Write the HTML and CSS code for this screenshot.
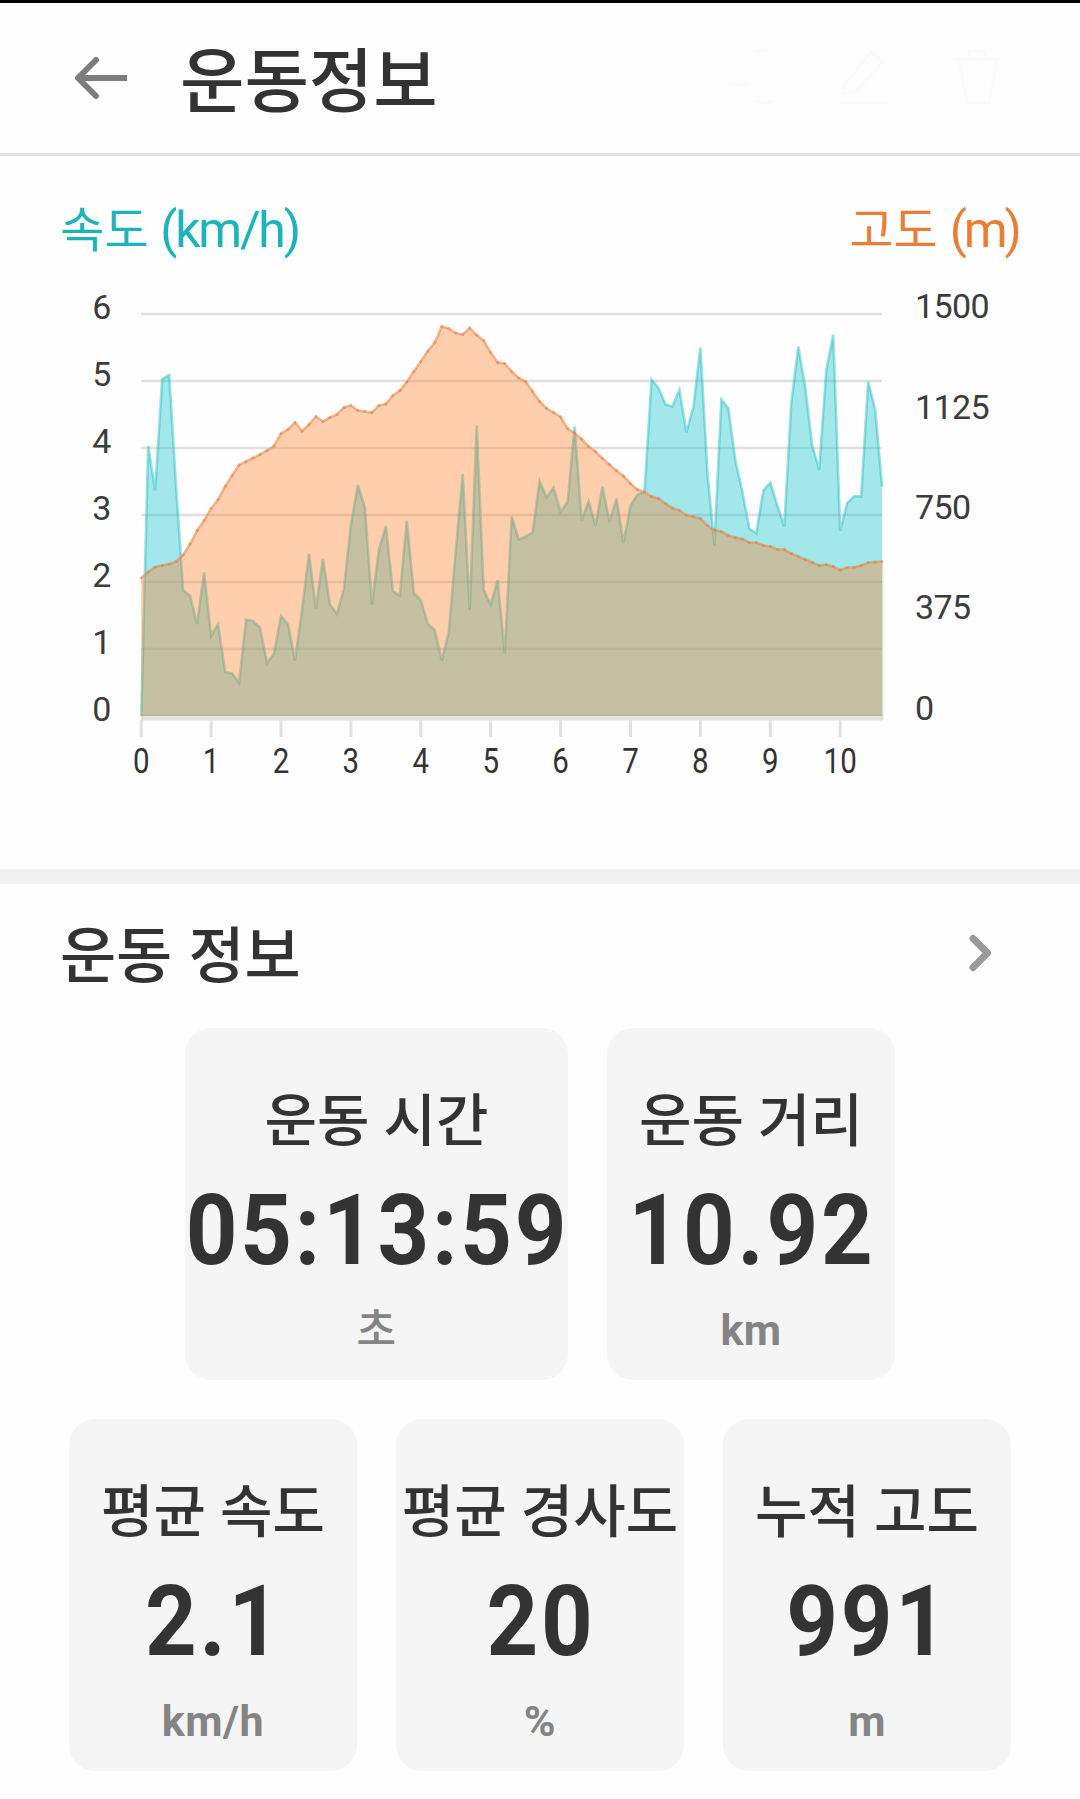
FILE: index.html
```html
<!DOCTYPE html>
<html lang="ko">
<head>
    <meta charset="UTF-8">
    <meta name="viewport" content="width=device-width, initial-scale=1.0">
    <title>운동정보</title>
    <link rel="stylesheet" href="styles.css">
</head>
<body>
    <header class="top-bar">
        <svg class="back-icon" width="56" height="44" viewBox="0 0 56 44">
            <path d="M23 4 L5 22 L23 40" />
            <path class="shaft" d="M5 22 H54" />
        </svg>
        <h1>운동정보</h1>
        <div class="actions">
            <svg width="52" height="60" viewBox="0 0 52 60">
                <path d="M2 34 Q12 40 22 36 M28 4 Q36 0 42 4 M28 52 Q38 58 46 52" />
            </svg>
            <svg width="52" height="60" viewBox="0 0 52 60">
                <path d="M4 46 L6 36 L32 4 L44 14 L18 42 Z M2 55 H48" />
            </svg>
            <svg width="52" height="60" viewBox="0 0 52 60">
                <path d="M2 11 H50 M18 10 V3 H34 V10 M8 12 L16 55 H38 L46 12" />
            </svg>
        </div>
    </header>

    <section class="chart-section">
        <div class="chart-head">
            <h2 class="speed-title">속도 <span>(km/h)</span></h2>
            <h2 class="altitude-title">고도 <span>(m)</span></h2>
        </div>
        <svg id="chart" class="chart" width="1080" height="530" viewBox="0 280 1080 530">
            <g id="grid"></g>
            <path class="base-line" d="M141 718.5 H882" />
            <polygon id="speed-area" class="speed-area" />
            <polyline id="speed-line" class="speed-line" />
            <polygon id="altitude-area" class="altitude-area" />
            <polyline id="altitude-line" class="altitude-line" />
            <g id="dots" class="dots"></g>
            <g id="labels"></g>
        </svg>
    </section>

    <section class="info-section">
        <div class="info-head">
            <h2>운동 정보</h2>
            <svg width="24" height="38" viewBox="0 0 24 38">
                <path d="M4 4.5 L18.5 19 L4 33.5" />
            </svg>
        </div>
        <div class="card-row">
            <div class="card wide">
                <div class="label">운동 시간</div>
                <div class="value">05:13:59</div>
                <div class="unit">초</div>
            </div>
            <div class="card">
                <div class="label">운동 거리</div>
                <div class="value">10.92</div>
                <div class="unit">km</div>
            </div>
        </div>
        <div class="card-row">
            <div class="card">
                <div class="label">평균 속도</div>
                <div class="value">2.1</div>
                <div class="unit">km/h</div>
            </div>
            <div class="card">
                <div class="label">평균 경사도</div>
                <div class="value">20</div>
                <div class="unit">%</div>
            </div>
            <div class="card">
                <div class="label">누적 고도</div>
                <div class="value">991</div>
                <div class="unit">m</div>
            </div>
        </div>
    </section>

    <script src="chart.js"></script>
</body>
</html>
```

FILE: styles.css
```css
* {
    box-sizing: border-box;
}
body {
    margin: 0;
    width: 1080px;
    height: 1799px;
    overflow: hidden;
    background-color: #fefefe;
    color: #333;
    font-family: Roboto, "Noto Sans CJK KR", sans-serif;
}
h1, h2 {
    margin: 0;
    font-weight: 500;
}
svg {
    display: block;
    fill: none;
}

/* Header */
.top-bar {
    display: flex;
    align-items: center;
    height: 156px;
    padding: 0 77px 0 73px;
    border-top: 3px solid #000;
    border-bottom: 3px solid #e2e2e2;
}
.top-bar h1 {
    margin-left: 51px;
    padding-top: 9px;
    font-size: 70px;
    line-height: 100px;
}
.back-icon {
    stroke: #7d7d7d;
    stroke-width: 6;
    stroke-linecap: round;
    stroke-linejoin: round;
}
.back-icon .shaft {
    stroke-linecap: butt;
}
.actions {
    display: flex;
    gap: 60px;
    margin-left: auto;
    stroke: #fbfbfb;
    stroke-width: 2;
}

/* Chart */
.chart-section {
    height: 713px;
}
.chart-head {
    display: flex;
    justify-content: space-between;
    height: 124px;
    padding: 42px 61px 0 60px;
}
.chart-head h2 {
    font-size: 48px;
    line-height: 64px;
    font-weight: 400;
}
.chart-head span {
    font-size: 50px;
    letter-spacing: -2.2px;
}
.speed-title {
    color: #1cb3bb;
}
.altitude-title {
    color: #e97f36;
}
.chart-head .altitude-title span {
    letter-spacing: -3px;
}
.grid-line {
    stroke: #e0e0e0;
    stroke-width: 2.6;
}
.edge-line {
    stroke: #e4e4e4;
    stroke-width: 1.5;
}
.base-line {
    stroke: #e2e2e0;
    stroke-width: 4;
}
.tick {
    stroke: #e0e0e0;
    stroke-width: 3;
}
.speed-area {
    fill: rgba(25, 200, 205, 0.4);
}
.speed-line {
    stroke: rgba(25, 180, 190, 0.42);
    stroke-width: 2.6;
}
.altitude-area {
    fill: rgba(255, 125, 36, 0.37);
}
.altitude-line {
    stroke: rgba(230, 135, 75, 0.55);
    stroke-width: 2.6;
}
.dots {
    fill: rgba(215, 120, 60, 0.45);
}
.axis-text {
    font-size: 34px;
    fill: #3c3c3c;
    letter-spacing: -0.6px;
}
.axis-text.bottom {
    font-size: 36px;
    fill: #333;
    letter-spacing: 0;
}

/* Workout info */
.info-section {
    border-top: 15px solid #f0f1f3;
}
.info-head {
    display: flex;
    align-items: center;
    justify-content: space-between;
    height: 144px;
    padding: 0 87px 6px 60px;
}
.info-head h2 {
    padding-top: 7px;
    font-size: 61px;
    line-height: 80px;
    word-spacing: 1px;
}
.info-head svg {
    stroke: #9a9a9a;
    stroke-width: 7;
    stroke-linecap: round;
    stroke-linejoin: round;
}
.card-row {
    display: flex;
    justify-content: center;
    gap: 39px;
    margin-bottom: 39px;
}
.card {
    width: 288px;
    height: 352px;
    padding-top: 54px;
    border-radius: 26px;
    background-color: #f5f5f5;
    text-align: center;
    white-space: nowrap;
}
.card.wide {
    width: 383px;
}
.label {
    font-size: 57px;
    line-height: 80px;
    font-weight: 500;
}
/* Condensed digits, the long time needs room before it is scaled */
.value {
    margin: 19px -30px 0 -28px;
    font-size: 98px;
    line-height: 100px;
    font-weight: 700;
    letter-spacing: 3px;
    transform: scaleX(0.92);
}
.unit {
    margin-top: 19px;
    font-size: 43px;
    line-height: 60px;
    font-weight: 700;
    letter-spacing: 0.5px;
    color: #848484;
}
.wide .unit {
    font-weight: 500;
}
```

FILE: chart.js
```js
const SVG_NS = 'http://www.w3.org/2000/svg';
const LEFT = 141.2;
const STEP = 6.99;
const BOTTOM = 716;

// One sample every 0.1 km, as heights on the canvas
const speed = [
    716, 446, 490.5, 379, 375, 487, 590, 596, 624, 572.5,
    636, 624, 672, 673.5, 683, 619.5, 621, 627.5, 663, 653.5,
    616, 624.5, 660.5, 610, 554, 608.5, 558.5, 604.5, 614, 589,
    525, 485, 507.5, 604.5, 550, 526, 591, 595.5, 520.5, 593,
    600, 624, 630, 660.5, 632, 550, 474, 610, 425.5, 590,
    604.5, 580, 653.5, 516.5, 539.5, 536.5, 532.5, 481, 497.5, 487.5,
    512, 502, 426.5, 520.5, 501.5, 525.5, 486.5, 522, 498.5, 543,
    505.5, 494.5, 492, 379.5, 388, 404.5, 406.5, 390, 432.5, 407,
    347.5, 473, 545.5, 399.5, 408.5, 460, 491.5, 528.5, 533.5, 490.5,
    482.5, 505.5, 526.5, 403, 346.5, 388, 445.5, 470, 371, 334.5,
    531, 503, 496, 496.5, 381.5, 410, 486.5
];
const altitude = [
    578, 572, 567, 565.5, 564, 561.5, 555, 544, 530.5, 520.5,
    508.5, 499.5, 486.5, 475.5, 465, 461.5, 458, 454.5, 450.5, 446,
    433.5, 429.5, 422.5, 431, 424.5, 416.5, 421.5, 417.5, 414.5, 407.5,
    405.5, 410.5, 411.5, 412.5, 405.5, 404, 395.5, 390.5, 382, 371.5,
    361.5, 351, 342.5, 326.5, 328.5, 333, 334.5, 328, 335, 340.5,
    352.5, 362.5, 363.5, 371.5, 378, 381.5, 391.5, 401.5, 408.5, 412.5,
    417, 428.5, 433, 439, 446.5, 451.5, 458.5, 464.5, 470.5, 476,
    483.5, 489.5, 492, 496.5, 498.5, 503.5, 508, 510.5, 515, 516.5,
    518.5, 525.5, 530, 531.5, 535.5, 537.5, 539, 542.5, 542.5, 545.5,
    546.5, 549.5, 549.5, 553.5, 556.5, 559.5, 562.5, 565.5, 564.5, 566.5,
    570, 567.5, 567.5, 565.5, 562.5, 562, 561.5
];

function add(parentId, tag, attrs, text) {
    const el = document.createElementNS(SVG_NS, tag);
    Object.keys(attrs).forEach(key => el.setAttribute(key, attrs[key]));
    if (text !== undefined) {
        el.textContent = text;
    }
    document.getElementById(parentId).appendChild(el);
}

function toPoints(series) {
    return series.map((y, i) => `${(LEFT + i * STEP).toFixed(1)},${y}`).join(' ');
}

const right = LEFT + 106 * STEP;
const floor = ` ${right.toFixed(1)},${BOTTOM} ${LEFT},${BOTTOM}`;

document.getElementById('speed-area').setAttribute('points', toPoints(speed) + floor);
document.getElementById('speed-line').setAttribute('points', toPoints(speed));
document.getElementById('altitude-area').setAttribute('points', toPoints(altitude) + floor);
document.getElementById('altitude-line').setAttribute('points', toPoints(altitude));
altitude.forEach((y, i) => add('dots', 'circle', { cx: LEFT + i * STEP, cy: y, r: 1.5 }));

// Speed axis and grid
for (let v = 0; v <= 6; v++) {
    const y = BOTTOM - v * 67;
    add('grid', 'path', { class: 'grid-line', d: `M141 ${y - (v ? 0 : 0.5)} H882` });
    add('labels', 'text', { class: 'axis-text', x: 101.5, y: y + 4.5, 'text-anchor': 'middle' }, v);
}
add('grid', 'path', { class: 'edge-line', d: 'M882.7 562 V720' });

// Altitude axis
[0, 375, 750, 1125, 1500].forEach((v, i) => {
    add('labels', 'text', { class: 'axis-text', x: 915, y: 719.5 - i * 100.3 }, v);
});

// Distance axis, narrow digits
for (let km = 0; km <= 10; km++) {
    const x = LEFT + km * 10 * STEP;
    add('grid', 'path', { class: 'tick', d: `M${x} 720 V737` });
    add('labels', 'text', {
        class: 'axis-text bottom',
        transform: `translate(${x} 773) scale(0.82 1)`,
        'text-anchor': 'middle'
    }, km);
}
```
